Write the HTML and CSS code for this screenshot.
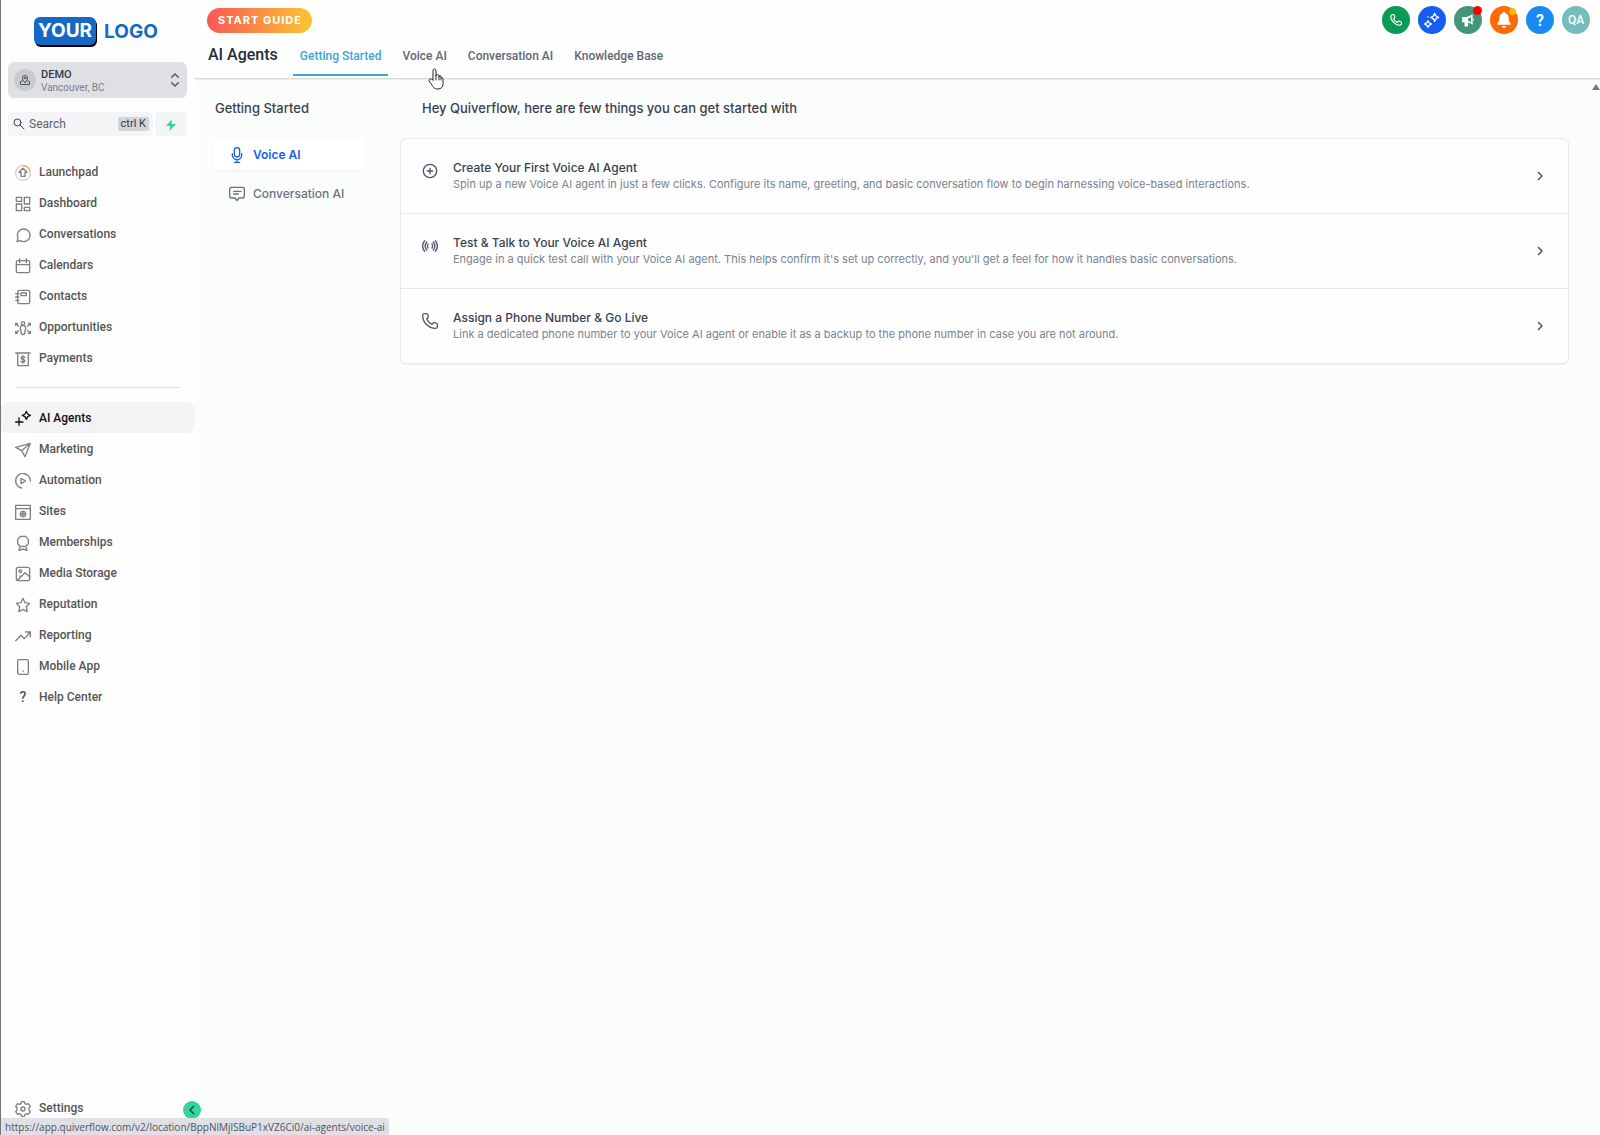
FILE: index.html
```html
<!DOCTYPE html>
<html lang="en">
<head>
    <meta charset="UTF-8">
    <meta name="viewport" content="width=device-width, initial-scale=1.0">
    <title>AI Agents</title>
    <link rel="stylesheet" href="styles.css">
</head>
<body>
    <aside class="sidebar">
        <a class="logo" href="#"><span class="logo-box">YOUR</span><span>LOGO</span></a>

        <button class="location">
            <span class="location-pin">
                <svg class="icon-small" viewBox="0 0 24 24"><path d="M12 17c-3-3.500-5-6-5-9a5 5 0 0 1 10 0c0 3-2 5.500-5 9z"/><circle cx="12" cy="8" r="1.500"/><path d="M7 14l-4 1v6h18v-6l-4-1"/></svg>
            </span>
            <span class="location-text">
                <span class="location-name">DEMO</span>
                <span class="location-city">Vancouver, BC</span>
            </span>
            <svg class="icon" viewBox="0 0 24 24"><path d="M7 8l5-5 5 5M7 16l5 5 5-5"/></svg>
        </button>

        <div class="search-row">
            <label class="search">
                <svg class="icon-small" viewBox="0 0 24 24"><circle cx="9" cy="9" r="7"/><path d="M14 14l8 8"/></svg>
                <input type="text" placeholder="Search" aria-label="Search">
                <kbd>ctrl K</kbd>
            </label>
            <button class="quick" aria-label="Quick actions">
                <svg class="icon-small" viewBox="0 0 24 24"><path d="M14 0L2 14h8l-1 10 13-14h-9z"/></svg>
            </button>
        </div>

        <nav class="nav">
            <a class="nav-item" href="#">
                <svg class="icon" viewBox="0 0 24 24"><circle class="ring" cx="12" cy="12" r="11"/><path class="ring-part" d="M12 1a11 11 0 0 1 10 7"/><path d="M12 5l6 6h-3v6H9v-6H6z"/></svg>
                Launchpad
            </a>
            <a class="nav-item" href="#">
                <svg class="icon" viewBox="0 0 24 24"><path d="M2 2h8v6H2zM14 2h8v10h-8zM2 12h8v10H2zM14 17h8v5h-8z"/></svg>
                Dashboard
            </a>
            <a class="nav-item" href="#">
                <svg class="icon" viewBox="0 0 24 24"><path d="M3 22l1.500-5.500A9.500 9.500 0 1 1 8 20.500z"/></svg>
                Conversations
            </a>
            <a class="nav-item" href="#">
                <svg class="icon" viewBox="0 0 24 24"><rect x="2" y="4" width="20" height="18" rx="2"/><path d="M2 10h20M7 1v6M17 1v6"/></svg>
                Calendars
            </a>
            <a class="nav-item" href="#">
                <svg class="icon" viewBox="0 0 24 24"><rect x="4" y="2" width="18" height="20" rx="2"/><rect x="9" y="6" width="8" height="4"/><path d="M1 7h5M1 12h5M1 17h5"/></svg>
                Contacts
            </a>
            <a class="nav-item" href="#">
                <svg class="icon" viewBox="0 0 24 24"><circle cx="12" cy="5" r="2.500"/><path d="M9 18v-3H8v-3a4 4 0 0 1 8 0v3h-1v3c0 5-6 5-6 0zM1 8V5h3M1 5l4 4M23 8V5h-3M23 5l-4 4M1 17v3h3M1 20l4-4M23 17v3h-3M23 20l-4-4"/></svg>
                Opportunities
            </a>
            <a class="nav-item" href="#">
                <svg class="icon" viewBox="0 0 24 24"><path d="M1 3h22M4 3v19h16V3M15 9.500c-1-1.500-6-1.500-6 1s6 1.500 6 4-5 2.500-6 1M12 7v11"/></svg>
                Payments
            </a>
        </nav>

        <hr class="nav-divider">

        <nav class="nav">
            <a class="nav-item active" href="#">
                <svg class="icon" viewBox="0 0 24 24"><path d="M17 2l2 4 4 2-4 2-2 4-2-4-4-2 4-2zM6 12v11M1 18h11"/></svg>
                AI Agents
            </a>
            <a class="nav-item" href="#">
                <svg class="icon" viewBox="0 0 24 24"><path d="M23 2L1 8l9 5 5 9zM23 2L10 13"/></svg>
                Marketing
            </a>
            <a class="nav-item" href="#">
                <svg class="icon" viewBox="0 0 24 24"><path d="M10 22.500A11 11 0 1 1 23 12M9 8v8l7-4z"/></svg>
                Automation
            </a>
            <a class="nav-item" href="#">
                <svg class="icon" viewBox="0 0 24 24"><path d="M1 2h22v21H1zM1 7h22"/><circle cx="12" cy="15" r="4"/><path d="M8 15h8M12 11v8"/></svg>
                Sites
            </a>
            <a class="nav-item" href="#">
                <svg class="icon" viewBox="0 0 24 24"><path d="M8 2h8l4 5v6l-4 4H8l-4-4V7zM8 17l-2 6 6-2 6 2-2-6"/></svg>
                Memberships
            </a>
            <a class="nav-item" href="#">
                <svg class="icon" viewBox="0 0 24 24"><rect x="2" y="2" width="20" height="20" rx="3"/><circle cx="8" cy="8" r="2"/><path d="M4 21l11-11 7 6M9 16l-2-1"/></svg>
                Media Storage
            </a>
            <a class="nav-item" href="#">
                <svg class="icon" viewBox="0 0 24 24"><path d="M12 2l3 6.500 7 1-5 5 1.200 7.500-6.200-3.500L5.800 22 7 14.500l-5-5 7-1z"/></svg>
                Reputation
            </a>
            <a class="nav-item" href="#">
                <svg class="icon" viewBox="0 0 24 24"><path d="M1 19l8-8 5 5L23 6M16 6h7v7"/></svg>
                Reporting
            </a>
            <a class="nav-item" href="#">
                <svg class="icon" viewBox="0 0 24 24"><rect x="4" y="1" width="16" height="22" rx="2"/><path d="M12 18h.5"/></svg>
                Mobile App
            </a>
            <a class="nav-item" href="#">
                <span class="icon glyph">?</span>
                Help Center
            </a>
        </nav>

        <nav class="nav nav-bottom">
            <a class="nav-item" href="#">
                <svg class="icon" viewBox="0 0 24 24"><path d="M10 1h4l1 3 2 1 3-1 3 4-2 2v4l2 2-3 4-3-1-2 1-1 3h-4l-1-3-2-1-3 1-3-4 2-2v-4L1 8l3-4 3 1 2-1z"/><circle cx="12" cy="12" r="3"/></svg>
                Settings
            </a>
        </nav>
        <button class="collapse" aria-label="Collapse sidebar">
            <svg class="icon-small" viewBox="0 0 24 24"><path d="M15 5l-7 7 7 7"/></svg>
        </button>
    </aside>

    <div class="page">
        <header class="header">
            <div class="header-top">
                <button class="guide">START GUIDE</button>
                <div class="actions">
                    <button class="action phone" aria-label="Phone">
                        <svg class="icon" viewBox="0 0 24 24"><path d="M4 4c1-2 4-2 5 0l1 3c0 2-2 2-2 3 1 3 3 5 6 6 1 0 1-2 3-2l3 1c2 1 2 4 0 5-3 2-8 0-12-4S2 7 4 4z"/></svg>
                    </button>
                    <button class="action ai" aria-label="Ask AI">
                        <svg class="icon" viewBox="0 0 24 24"><path d="M16 2c1 4 2 5 6 6-4 1-5 2-6 6-1-4-2-5-6-6 4-1 5-2 6-6zM6 13c.5 3 2 4 5 5-3 1-4 2-5 5-1-3-2-4-5-5 3-1 4.500-2 5-5zM6 7v.5"/></svg>
                    </button>
                    <button class="action news" aria-label="Announcements">
                        <svg class="icon solid" viewBox="0 0 24 24"><path d="M20 2v18l-8-4v7H6v-7H2V7h8zM21 9c2 1 2 4 0 5z"/><path class="cutout" d="M12 10l5-3v9l-5-3z"/></svg>
                        <span class="dot red"></span>
                    </button>
                    <button class="action alerts" aria-label="Notifications">
                        <svg class="icon solid" viewBox="0 0 24 24"><path d="M12 0c2 0 2 1 2 2 4 1 5 4 5 8 0 5 3 5 3 9H2c0-4 3-4 3-9 0-4 1-7 5-8 0-1 0-2 2-2zM9 21h6c0 4-6 4-6 0z"/></svg>
                        <span class="dot yellow"></span>
                    </button>
                    <button class="action help">?</button>
                    <button class="action user">QA</button>
                </div>
            </div>
            <div class="header-tabs">
                <h1>AI Agents</h1>
                <nav class="tabs">
                    <a class="tab current" href="#">Getting Started</a>
                    <a class="tab" href="#">Voice AI</a>
                    <a class="tab" href="#">Conversation AI</a>
                    <a class="tab" href="#">Knowledge Base</a>
                </nav>
            </div>
        </header>

        <main class="content">
            <section class="topics">
                <h2>Getting Started</h2>
                <a class="topic selected" href="#">
                    <svg class="icon" viewBox="0 0 24 24"><rect x="8" y="1" width="8" height="14" rx="4"/><path d="M5 10v2a7 7 0 0 0 14 0v-2M12 19v4M8 23h8"/></svg>
                    Voice AI
                </a>
                <a class="topic" href="#">
                    <svg class="icon" viewBox="0 0 24 24"><path d="M4 2h16q3 0 3 3v10q0 3-3 3h-5l-3 4-3-4H4q-3 0-3-3V5q0-3 3-3zM7 8h11M7 12h7"/></svg>
                    Conversation AI
                </a>
            </section>
            <section class="steps">
                <h2>Hey Quiverflow, here are few things you can get started with</h2>
                <div class="card">
                    <a class="step" href="#">
                        <svg class="icon" viewBox="0 0 24 24"><circle cx="12" cy="12" r="10"/><path d="M12 8v8M8 12h8"/></svg>
                        <span class="step-text">
                            <span class="step-title">Create Your First Voice AI Agent</span>
                            <span class="step-info">Spin up a new Voice AI agent in just a few clicks. Configure its name, greeting, and basic conversation flow to begin harnessing voice-based interactions.</span>
                        </span>
                        <svg class="icon-small chevron" viewBox="0 0 24 24"><path d="M9 5l7 7-7 7"/></svg>
                    </a>
                    <a class="step" href="#">
                        <svg class="icon" viewBox="0 0 24 24"><path d="M4 4c-4 5-4 11 0 16M7 6c-3 4-3 8 0 12M9 9c-1 2-1 4 0 6M20 4c4 5 4 11 0 16M17 6c3 4 3 8 0 12M15 9c1 2 1 4 0 6"/></svg>
                        <span class="step-text">
                            <span class="step-title">Test &amp; Talk to Your Voice AI Agent</span>
                            <span class="step-info">Engage in a quick test call with your Voice AI agent. This helps confirm it's set up correctly, and you'll get a feel for how it handles basic conversations.</span>
                        </span>
                        <svg class="icon-small chevron" viewBox="0 0 24 24"><path d="M9 5l7 7-7 7"/></svg>
                    </a>
                    <a class="step" href="#">
                        <svg class="icon" viewBox="0 0 24 24"><path d="M3 1h4c2 0 3 5 2 6L7 9c2 4 4 6 8 8l2-2c1-1 6 0 6 2v4c0 1-1 2-3 2C10 23 1 14 1 4c0-2 1-3 2-3z"/></svg>
                        <span class="step-text">
                            <span class="step-title">Assign a Phone Number &amp; Go Live</span>
                            <span class="step-info">Link a dedicated phone number to your Voice AI agent or enable it as a backup to the phone number in case you are not around.</span>
                        </span>
                        <svg class="icon-small chevron" viewBox="0 0 24 24"><path d="M9 5l7 7-7 7"/></svg>
                    </a>
                </div>
            </section>
            <span class="scroll-arrow"></span>
        </main>
    </div>

    <svg class="pointer" viewBox="0 0 16 22"><path d="M5 12V3c0-3 3-3 3 0v5c0-2 3-2 3 0v1c0-2 2-2 2 0v1c0-1 2-1 2 1v5c0 3-2 5-5 5-4 0-5-2-6-4l-3-4c0-3 3-2 4-1zM8 8v4M11 9v3M13 10v2"/></svg>
    <div class="status">https://app.quiverflow.com/v2/location/BppNlMjlSBuP1xVZ6Ci0/ai-agents/voice-ai</div>
</body>
</html>
```
FILE: styles.css
```css
* {
    box-sizing: border-box;
}

body {
    display: flex;
    min-height: 100vh;
    margin: 0;
    background-color: #fbfdfd;
    color: #374151;
    font-family: Roboto, sans-serif;
    font-size: 12px;
    position: relative;
}

a {
    color: inherit;
    text-decoration: none;
}

button {
    border: none;
    padding: 0;
    font-family: inherit;
    cursor: pointer;
}

h1, h2 {
    margin: 0;
    font-weight: 500;
}

svg {
    fill: none;
    stroke: currentColor;
    stroke-width: 2;
    stroke-linecap: round;
    stroke-linejoin: round;
}

.icon {
    width: 16px;
    height: 16px;
    flex-shrink: 0;
}

.icon-small {
    width: 12px;
    height: 12px;
    flex-shrink: 0;
}

/* sidebar */
.sidebar {
    position: relative;
    display: flex;
    flex-direction: column;
    flex-shrink: 0;
    width: 194px;
    border-left: 1px solid #777;
    background-color: #fefefe;
}

.logo {
    display: flex;
    align-items: center;
    gap: 8px;
    height: 62px;
    padding-left: 33px;
    font-family: Inter, sans-serif;
    font-size: 19px;
    font-weight: 700;
    color: #1369c3;
}

.logo-box {
    padding: 0 4px;
    line-height: 28px;
    border-radius: 6px;
    background-color: #1369c3;
    box-shadow: 1px 2px 0 #000;
    color: #fff;
}

.location {
    display: flex;
    align-items: center;
    gap: 5px;
    height: 36px;
    margin: 0 7px 14px;
    padding: 0 4px 0 6px;
    border-radius: 6px;
    background-color: #dfe0e4;
    color: #4b5563;
    text-align: left;
}

.location-pin {
    display: flex;
    align-items: center;
    justify-content: center;
    width: 22px;
    height: 22px;
    border-radius: 50%;
    background-color: #c9cacd;
}

.location-text {
    display: flex;
    flex-direction: column;
    flex: 1;
    padding-top: 2px;
    line-height: 13px;
}

.location-name {
    font-size: 11px;
    font-weight: 500;
    color: #333b47;
}

.location-city {
    font-size: 10px;
    color: #7b7e85;
}

.search-row {
    display: flex;
    gap: 2px;
    height: 24px;
    margin: 0 7px 20px;
}

.search {
    display: flex;
    align-items: center;
    flex: 1;
    gap: 4px;
    min-width: 0;
    padding: 0 4px 0 5px;
    border-radius: 4px;
    background-color: #f4f5f7;
}

.search input {
    flex: 1;
    width: 0;
    min-width: 0;
    padding: 0;
    border: none;
    outline: none;
    background: none;
    font-family: inherit;
    font-size: 12px;
    color: #5b616b;
}

.search input::placeholder {
    color: #5b616b;
}

.search kbd {
    flex-shrink: 0;
    padding: 0 3px;
    line-height: 14px;
    border-radius: 2px;
    background-color: #d3d5db;
    font-family: inherit;
    font-size: 11px;
    color: #333b47;
}

.quick {
    flex-shrink: 0;
    width: 32px;
    border-radius: 4px;
    background-color: #f4f5f7;
    color: #37d39b;
}

.quick svg {
    fill: currentColor;
    stroke: none;
    vertical-align: middle;
}

.nav-item {
    display: flex;
    align-items: center;
    gap: 8px;
    height: 31px;
    padding-left: 14px;
    border-radius: 6px;
    font-weight: 500;
    color: #555;
}

.nav-item .icon {
    margin-top: 2px;
    color: #808080;
}

.nav-item.active {
    background-color: #f2f3f5;
    color: #111;
}

.nav-item.active .icon {
    margin-top: 0;
    color: #111;
}

.nav-item .glyph {
    margin-top: 0;
    text-align: center;
    font-size: 14px;
    line-height: 16px;
    color: #555;
}

.nav-item .ring {
    stroke: #d0d2d8;
}

.nav-item .ring-part {
    stroke: #f5a66a;
}

.nav-divider {
    width: 165px;
    margin: 14px;
    border: none;
    border-top: 1px solid #dfdfdf;
}

.nav-bottom {
    margin-top: auto;
    margin-bottom: 12px;
}

.collapse {
    position: absolute;
    right: -7px;
    bottom: 16px;
    display: flex;
    align-items: center;
    justify-content: center;
    width: 18px;
    height: 18px;
    border-radius: 50%;
    background-color: #37d39b;
    color: #14533c;
}

.collapse svg {
    stroke-width: 3;
}

/* header */
.page {
    flex: 1;
    min-width: 0;
}

.header {
    height: 78px;
    padding: 6px 10px 0 13px;
    background-color: #fefefe;
    box-shadow: 0 1px 2px rgba(0, 0, 0, 0.2);
}

.header-top {
    display: flex;
    align-items: center;
    justify-content: space-between;
}

.guide {
    padding: 0 10px 0 11px;
    line-height: 25px;
    border-radius: 13px;
    background: linear-gradient(90deg, #fa5858, #fbc531);
    font-family: Inter, sans-serif;
    font-size: 11px;
    font-weight: 700;
    letter-spacing: 1px;
    color: #fff;
}

.actions {
    display: flex;
    gap: 8px;
}

.action {
    position: relative;
    display: flex;
    align-items: center;
    justify-content: center;
    width: 28px;
    height: 28px;
    border-radius: 50%;
    font-size: 14px;
    font-weight: 500;
    color: #fff;
}

.solid {
    fill: currentColor;
    stroke: none;
}

.cutout {
    fill: #459579;
}

.phone svg,
.news svg {
    width: 14px;
    height: 14px;
}

.phone {
    background-color: #0b9a56;
}

.ai {
    background-color: #155eef;
}

.news {
    background-color: #459579;
}

.alerts {
    background-color: #ff6a05;
}

.help {
    background-color: #188bf6;
    font-size: 16px;
    font-weight: 700;
}

.user {
    background-color: #76bcbb;
    font-size: 12px;
}

.dot {
    position: absolute;
    border-radius: 50%;
}

.dot.red {
    top: 0;
    right: 0;
    width: 9px;
    height: 9px;
    background-color: #f00;
}

.dot.yellow {
    top: 2px;
    right: 2px;
    width: 7px;
    height: 7px;
    background-color: #ffb800;
}

.header-tabs {
    display: flex;
    gap: 15px;
    padding-left: 1px;
}

.header-tabs h1 {
    font-size: 16px;
    line-height: 42px;
    color: #252d3a;
}

.tabs {
    display: flex;
    gap: 7px;
}

.tab {
    height: 42px;
    padding: 0 7px;
    line-height: 44px;
    font-weight: 500;
    color: #606875;
}

.tab.current {
    border-bottom: 2px solid #3fa5dd;
    color: #3fa5dd;
}

/* content */
.content {
    position: relative;
    display: flex;
    gap: 34px;
    padding: 22px 31px 0 20px;
    font-family: Inter, sans-serif;
}

.content h2 {
    font-size: 13px;
    line-height: 16px;
}

.topics {
    display: flex;
    flex-direction: column;
    width: 152px;
}

.topics h2 {
    padding-left: 1px;
    margin-bottom: 23px;
}

.topic {
    display: flex;
    align-items: center;
    gap: 8px;
    height: 31px;
    margin-bottom: 8px;
    padding-left: 15px;
    border-radius: 5px;
    font-weight: 500;
    color: #6b7280;
}

.topic.selected {
    background-color: #fff;
    box-shadow: 0 1px 2px rgba(0, 0, 0, 0.06);
    font-weight: 600;
    color: #155eef;
}

.steps {
    flex: 1;
    min-width: 0;
}

.steps h2 {
    padding-left: 22px;
    margin-bottom: 22px;
}

.card {
    border: 1px solid #e6e8ec;
    border-radius: 6px;
    background-color: #fefefe;
    box-shadow: 0 1px 2px rgba(0, 0, 0, 0.05);
}

.step {
    display: flex;
    align-items: flex-start;
    gap: 15px;
    padding: 20px 22px 20px 21px;
}

.step + .step {
    border-top: 1px solid #e6e8ec;
}

.step .icon {
    margin-top: 4px;
    color: #4b5565;
}

.step-text {
    display: flex;
    flex-direction: column;
    flex: 1;
    line-height: 17px;
}

.step-title {
    font-weight: 500;
}

.step-info {
    font-size: 11px;
    color: #7a828f;
}

.chevron {
    align-self: center;
    color: #4b5563;
    stroke-width: 3;
}

.scroll-arrow {
    position: absolute;
    top: 6px;
    right: 0;
    border: 4px solid transparent;
    border-top: none;
    border-bottom: 6px solid #777;
}

.pointer {
    position: absolute;
    left: 428px;
    top: 68px;
    width: 16px;
    height: 22px;
    fill: #fff;
    stroke: #223;
    stroke-width: 1;
}

.status {
    position: absolute;
    left: 0;
    bottom: 0;
    padding: 2px 4px 0;
    border-left: 1px solid #777;
    border-top-right-radius: 4px;
    background-color: #dee0e5;
    font-family: "Open Sans", sans-serif;
    font-size: 10px;
    line-height: 15px;
    color: #50545b;
}
```
